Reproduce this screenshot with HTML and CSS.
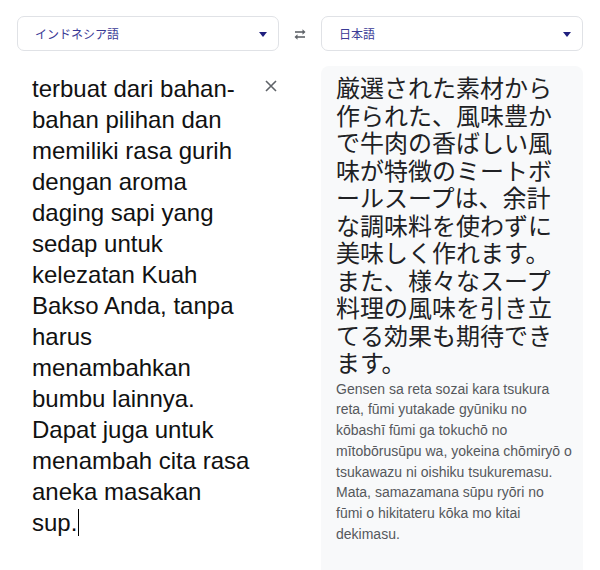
FILE: index.html
```html
<!DOCTYPE html>
<html lang="ja">
<head>
<meta charset="utf-8">
<title>翻訳</title>
<link rel="stylesheet" href="styles.css">
</head>
<body>
<div class="app">
  <div class="langbar">
    <div class="select">
      <span class="select-label">インドネシア語</span>
      <span class="caret"></span>
    </div>
    <div class="swap">
      <svg width="16" height="12" viewBox="0 0 16 12" aria-hidden="true">
        <path d="M3 4h9" stroke="#5f6368" stroke-width="1.6" fill="none"/>
        <path d="M10.5 1.2 13.5 4 10.5 6.8z" fill="#5f6368"/>
        <path d="M4 9h9" stroke="#5f6368" stroke-width="1.6" fill="none"/>
        <path d="M5.5 6.2 2.5 9 5.5 11.8z" fill="#5f6368"/>
      </svg>
    </div>
    <div class="select">
      <span class="select-label">日本語</span>
      <span class="caret"></span>
    </div>
  </div>
  <div class="panels">
    <div class="panel source">
      <div class="source-text">terbuat dari bahan-bahan pilihan dan memiliki rasa gurih dengan aroma daging sapi yang sedap untuk kelezatan Kuah Bakso Anda, tanpa harus menambahkan bumbu lainnya. Dapat juga untuk menambah cita rasa aneka masakan sup.<span class="cursor"></span></div>
      <button class="clear" aria-label="クリア">
        <svg width="12" height="12" viewBox="0 0 12 12" aria-hidden="true">
          <path d="M1 1 11 11M11 1 1 11" stroke="#5f6368" stroke-width="1.6"/>
        </svg>
      </button>
    </div>
    <div class="panel target">
      <div class="target-text">厳選された素材から作られた、風味豊かで牛肉の香ばしい風味が特徴のミートボールスープは、余計な調味料を使わずに美味しく作れます。また、様々なスープ料理の風味を引き立てる効果も期待できます。</div>
      <div class="romaji">Gensen sa reta sozai kara tsukura reta, fūmi yutakade gyūniku no kōbashī fūmi ga tokuchō no mītobōrusūpu wa, yokeina chōmiryō o tsukawazu ni oishiku tsukuremasu. Mata, samazamana sūpu ryōri no fūmi o hikitateru kōka mo kitai dekimasu.</div>
    </div>
  </div>
</div>
</body>
</html>
```
FILE: styles.css
```css
html, body {
  margin: 0;
  padding: 0;
  background: #ffffff;
  overflow: hidden;
}
.app {
  width: 600px;
  height: 570px;
  padding: 16px 17px 0 17px;
  box-sizing: border-box;
  font-family: "Liberation Sans", Arial, sans-serif;
}
.langbar {
  display: flex;
  align-items: center;
}
.select {
  width: 262px;
  height: 35px;
  box-sizing: border-box;
  border: 1px solid #e0e2e6;
  border-radius: 7px;
  display: flex;
  align-items: center;
  justify-content: space-between;
  padding: 0 11px 0 17px;
  background: #fff;
}
.select-label {
  font-family: "Noto Sans CJK JP", sans-serif;
  font-size: 12px;
  color: #3a3a96;
}
.caret {
  width: 0;
  height: 0;
  border-left: 4.5px solid transparent;
  border-right: 4.5px solid transparent;
  border-top: 5px solid #1f1f7e;
  margin-top: 1px;
}
.swap {
  width: 42px;
  display: flex;
  justify-content: center;
  align-items: center;
  padding-top: 1px;
}
.swap svg { display: block; }
.panels {
  display: flex;
  margin-top: 15px;
  gap: 42px;
}
.panel {
  width: 262px;
  box-sizing: border-box;
}
.source {
  display: flex;
  justify-content: space-between;
  padding: 7px 0 0 15px;
}
.source-text {
  width: 220px;
  font-size: 24px;
  line-height: 31px;
  color: #111;
}
.cursor {
  display: inline-block;
  width: 0;
  height: 27px;
  border-left: 1px solid #000;
  vertical-align: -5px;
  margin-left: 1px;
}
.clear {
  border: 0;
  background: none;
  padding: 0;
  width: 16px;
  height: 16px;
  margin-top: 5px;
  display: flex;
  align-items: center;
  justify-content: center;
  cursor: pointer;
}
.target {
  background: #f8f9fa;
  border-radius: 8px 8px 0 0;
  height: 520px;
  padding: 7px 10px 0 15px;
}
.target-text {
  font-family: "Noto Sans CJK JP", sans-serif;
  font-size: 24px;
  line-height: 27.5px;
  color: #202124;
}
.romaji {
  margin-top: 3px;
  font-size: 14px;
  line-height: 20.8px;
  color: #55585c;
}
```
